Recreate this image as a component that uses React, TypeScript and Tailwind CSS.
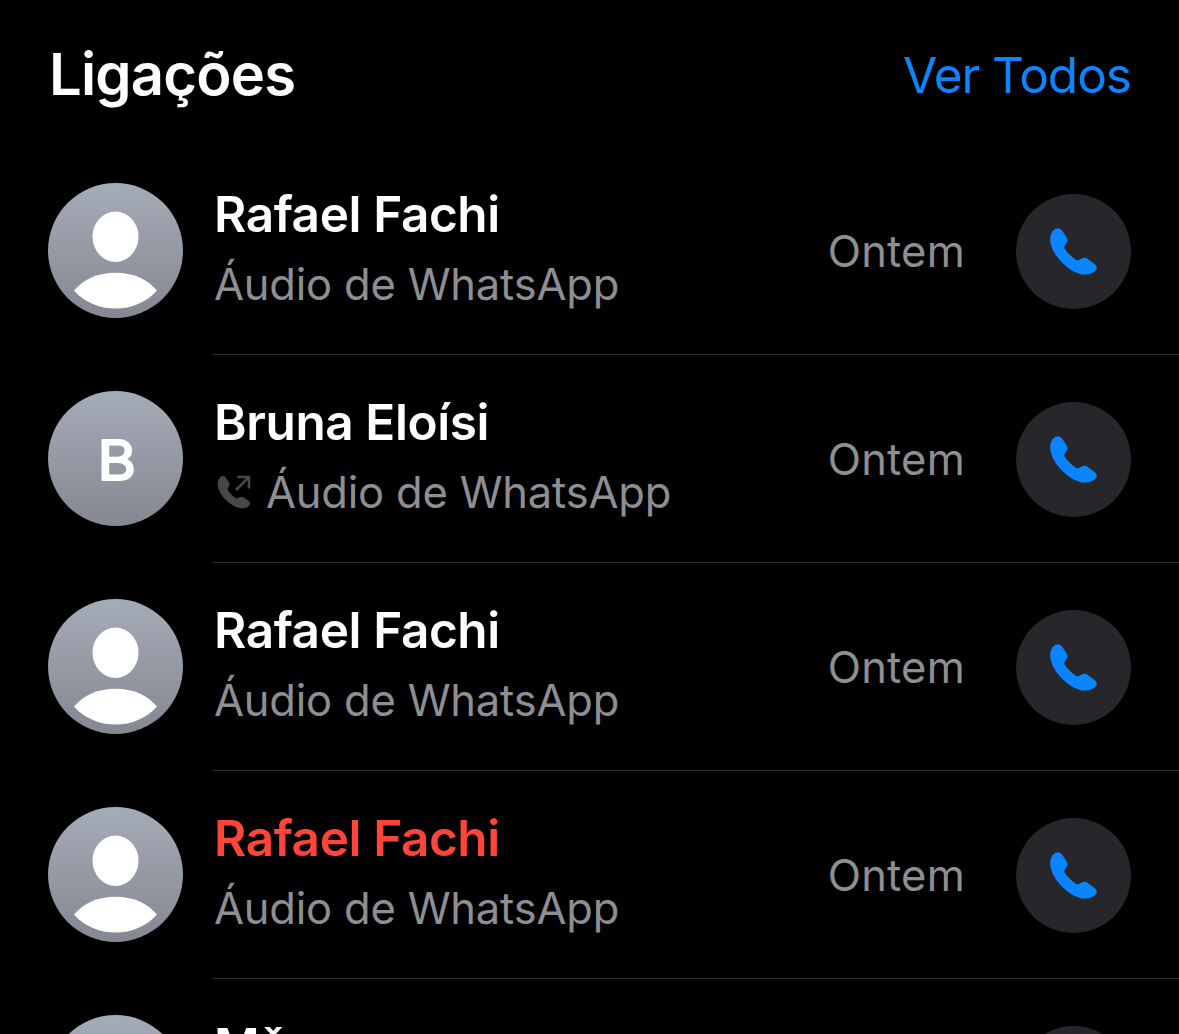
// components/calls/CallList.tsx
interface Call {
  id: number;
  name: string;
  missed?: boolean;
  outgoing?: boolean;
  initial?: string;
  when: string;
}

const calls: Call[] = [
  { id: 1, name: 'Rafael Fachi', when: 'Ontem' },
  { id: 2, name: 'Bruna Eloísi', outgoing: true, initial: 'B', when: 'Ontem' },
  { id: 3, name: 'Rafael Fachi', when: 'Ontem' },
  { id: 4, name: 'Rafael Fachi', missed: true, when: 'Ontem' },
  { id: 5, name: 'Mǎ', when: 'Ontem' },
];

const HANDSET =
  'M8.8 .4C5.5 -.4 .5 3.5 .2 10.8C-.1 18 4 26.500 12.2 34.700C20.500 42.800 29 46.900 36.200 46.600C42.800 46.300 47 42.500 46.700 39.300C46.500 37.600 45.300 36.500 43.600 35.200L37.800 31C35.800 29.600 33.900 29.500 31.700 30.600L29 32C27.700 32.600 26.800 32.400 25.500 31.500C21.500 28.700 17.800 25 15 21C14.100 19.700 14.100 18.900 14.700 17.800L16.700 14.500C17.900 12.500 17.600 11.100 16.400 9.100L12 2.600C11.100 1.300 10.200 .6 8.800 .4Z';

function Avatar({ initial }: { initial?: string }) {
  return (
    <div className="w-[135px] h-[135px] shrink-0 rounded-full overflow-hidden bg-linear-to-b from-[#a5abb9] to-[#858891]">
      <svg width="135" height="135" viewBox="0 0 135 135" fill="#fff">
        {initial ? (
          <text
            transform="translate(68.700 88.800) scale(1.070 1)"
            textAnchor="middle"
            fontSize="55"
            stroke="#fff"
            strokeWidth="2"
            strokeLinejoin="round"
            className="font-['Inter',sans-serif]"
          >
            {initial}
          </text>
        ) : (
          <>
            <ellipse cx="67.500" cy="53.700" rx="23" ry="25.200" />
            <path d="M26 107.500C36 96 50 89.800 67.500 89.800S99 96 109 107.500C99 119 83.500 125.600 67.500 125.600S36 119 26 107.500Z" />
          </>
        )}
      </svg>
    </div>
  );
}

function OutgoingIcon() {
  return (
    <svg className="ml-[3px] mr-[15px] shrink-0" width="34" height="34" viewBox="0 0 34 34" fill="#48484a">
      <path transform="translate(.5 .9) scale(.695)" d={HANDSET} />
      <path d="M19 15L31.500 2.500M20.500 2H32V13.500" fill="none" stroke="#48484a" strokeWidth="2.500" />
    </svg>
  );
}

function CallRow({ call }: { call: Call }) {
  return (
    <div className="flex h-[208px] shrink-0 pl-12">
      <div className="pt-9">
        <Avatar initial={call.initial} />
      </div>
      <div className="ml-[30px] flex flex-1 border-b border-[#333336] pr-12">
        <div className="flex-1 pt-[37px]">
          <div
            className={`h-[60px] pl-px whitespace-nowrap text-[49.5px] leading-[60px] font-semibold tracking-[-0.4px] ${
              call.missed ? 'text-[#ff453a]' : 'text-white'
            }`}
          >
            {call.name}
          </div>
          <div className="mt-[10px] flex h-[60px] items-center pl-px whitespace-nowrap text-[43.5px] leading-[60px] tracking-[-0.2px] text-[#8e8e93]">
            {call.outgoing && <OutgoingIcon />}
            Áudio de WhatsApp
          </div>
        </div>
        <div className="mt-[74px] mr-[51px] h-[60px] text-[43.5px] leading-[60px] tracking-[0.2px] text-[#8e8e93]">{call.when}</div>
        <button className="mt-[47px] flex h-[115px] w-[115px] items-center justify-center rounded-full bg-[#27272b]" aria-label="Ligar">
          <svg width="47" height="47" viewBox="0 0 47 47" fill="#0a84ff">
            <path d={HANDSET} />
          </svg>
        </button>
      </div>
    </div>
  );
}

export default function App() {
  return (
    <main className="flex h-[1034px] w-[1179px] flex-col overflow-hidden bg-black font-['Inter',sans-serif]">
      <header className="flex h-[147px] shrink-0 items-start justify-between pr-12 pl-[49px]">
        <h2 className="mt-[39px] text-[58px] leading-[70px] font-semibold tracking-[-0.8px] text-white">Ligações</h2>
        <a className="mt-[40px] text-[49.5px] leading-[70px] tracking-[-1px] text-[#0a84ff]">Ver Todos</a>
      </header>
      {calls.map(call => (
        <CallRow key={call.id} call={call} />
      ))}
    </main>
  );
}
